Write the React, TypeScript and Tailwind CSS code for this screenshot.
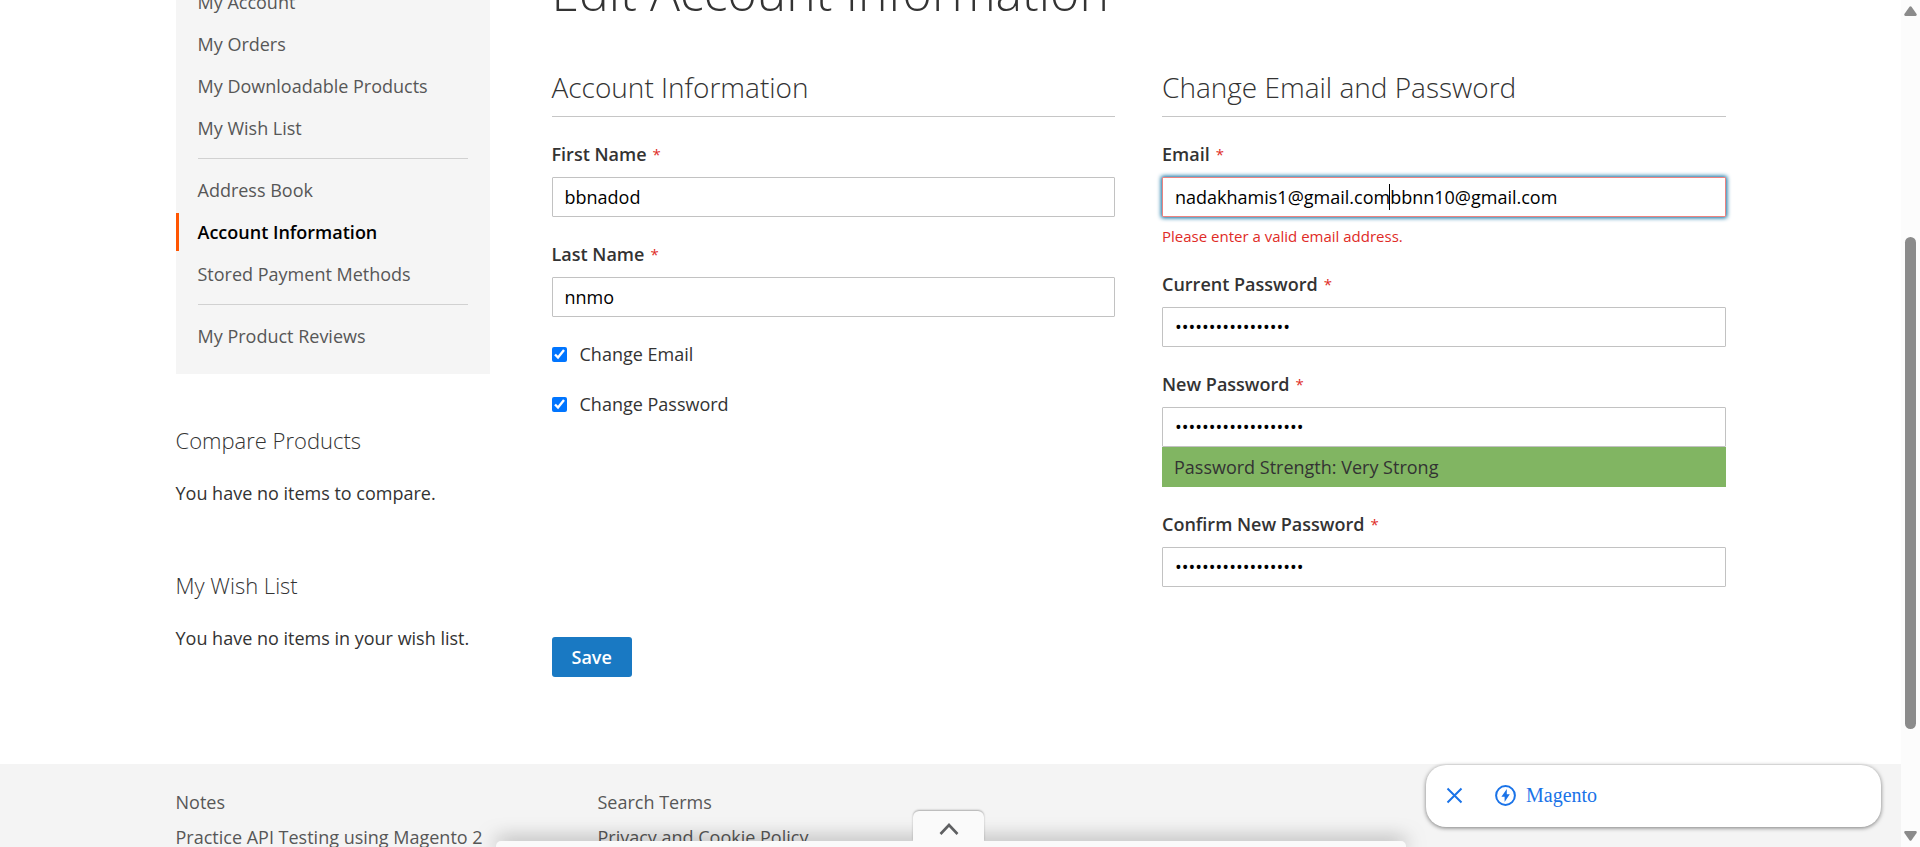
import React from "react";

type NavItem = { label: string; current?: boolean };

const navGroups: NavItem[][] = [
  [
    { label: "My Account" },
    { label: "My Orders" },
    { label: "My Downloadable Products" },
    { label: "My Wish List" },
  ],
  [
    { label: "Address Book" },
    { label: "Account Information", current: true },
    { label: "Stored Payment Methods" },
  ],
  [{ label: "My Product Reviews" }],
];

const footerColumns: string[][] = [
  ["Notes", "Practice API Testing using Magento 2"],
  ["Search Terms", "Privacy and Cookie Policy"],
];

function SideNav() {
  return (
    <nav aria-label="Account" className="bg-[#f5f5f5] pt-[18px] pb-[19px]">
      {navGroups.map((group, index) => (
        <React.Fragment key={index}>
          {index > 0 && <hr className="mx-[22px] mt-[11px] mb-3 border-[#d1d1d1]" />}
          <ul className="flex flex-col gap-1">
            {group.map((item) => (
              <li key={item.label}>
                <a
                  href="#"
                  aria-current={item.current ? "page" : undefined}
                  className={
                    item.current
                      ? "flex h-[38px] items-center border-l-[3px] border-[#ff5501] pl-[19px] font-semibold text-black"
                      : "flex h-[38px] items-center border-l-[3px] border-transparent pl-[19px] text-[#575757]"
                  }
                >
                  {item.label}
                </a>
              </li>
            ))}
          </ul>
        </React.Fragment>
      ))}
    </nav>
  );
}

function SideBlock({ title, text }: { title: string; text: string }) {
  return (
    <section>
      <h2 className="text-[22px] leading-7 font-light">{title}</h2>
      <p className="mt-[27px]">{text}</p>
    </section>
  );
}

function Field({
  id,
  label,
  type = "text",
  value,
  invalid,
  children,
}: {
  id: string;
  label: string;
  type?: string;
  value: string;
  invalid?: boolean;
  children?: React.ReactNode;
}) {
  return (
    <div>
      <label htmlFor={id} className="mb-[10px] flex gap-[6px] font-semibold">
        {label}
        <span className="text-[15px] font-normal text-[#e02b27]">*</span>
      </label>
      <div className="relative">
        <input
          id={id}
          type={type}
          defaultValue={value}
          aria-invalid={invalid}
          className={
            invalid
              ? "block h-10 w-full rounded-[1px] border border-[#ed8380] bg-white px-3 text-black shadow-[0_0_4px_1px_#00699d] outline-none"
              : "block h-10 w-full rounded-[1px] border border-[#c2c2c2] bg-white px-3 text-black outline-none"
          }
        />
        {invalid && <span className="absolute top-[7px] left-[227px] h-[26px] w-px bg-black" />}
      </div>
      {children}
    </div>
  );
}

function Check({ id, label }: { id: string; label: string }) {
  return (
    <div className="flex items-center gap-[13px]">
      <input id={id} type="checkbox" defaultChecked className="size-[15px] accent-[#0075ff]" />
      <label htmlFor={id}>{label}</label>
    </div>
  );
}

function Legend({ children }: { children: string }) {
  return (
    <h2 className="border-b border-[#c6c6c6] pb-3 text-[28px] leading-[34px] font-light">
      {children}
    </h2>
  );
}

function ScrollTrack() {
  return (
    <div className="flex w-[19px] shrink-0 flex-col items-center justify-between bg-[#fcfcfc] py-[6px]">
      <svg width="13" height="10" viewBox="0 0 13 10" fill="#8b8b8b">
        <path d="M5.5 0.8Q6.5-.4 7.5.8L12.6 8Q13.2 9.8 11.6 10H1.4Q-.2 9.8.4 8Z" />
      </svg>
      <div className="flex w-full grow flex-col items-center">
        <div className="grow-[221]" />
        <div className="w-[11px] grow-[492] rounded-full bg-[#8b8b8b]" />
        <div className="grow-[102]" />
      </div>
      <svg width="13" height="10" viewBox="0 0 13 10" fill="#8b8b8b">
        <path d="M5.5 9.2Q6.5 10.4 7.5 9.2L12.6 2Q13.2.2 11.6 0H1.4Q-.2.2.4 2Z" />
      </svg>
    </div>
  );
}

export default function App() {
  return (
    <div className="relative flex h-screen overflow-hidden bg-white font-['Open_Sans',sans-serif] text-[18px] leading-[25px] text-[#333]">
      <div className="min-w-0 grow overflow-hidden">
        <div className="mx-auto -mt-[35px] flex max-w-[1600px] gap-[62px] px-[25px] pb-[87px]">
          <aside className="w-[314px] shrink-0">
            <SideNav />
            <div className="mt-[52px] flex flex-col gap-[65px]">
              <SideBlock title="Compare Products" text="You have no items to compare." />
              <SideBlock title="My Wish List" text="You have no items in your wish list." />
            </div>
          </aside>

          <main className="min-w-0 grow">
            <h1 className="text-[50px] leading-[55px] font-light">Edit Account Information</h1>
            <form onSubmit={(event) => event.preventDefault()}>
              <div className="mt-[50px] grid grid-cols-2 gap-[47px]">
                <section>
                  <Legend>Account Information</Legend>
                  <div className="mt-[25px] flex flex-col gap-[25px]">
                    <Field id="firstname" label="First Name" value="bbnadod" />
                    <Field id="lastname" label="Last Name" value="nnmo" />
                    <Check id="change-email" label="Change Email" />
                    <Check id="change-password" label="Change Password" />
                  </div>
                </section>
                <section>
                  <Legend>Change Email and Password</Legend>
                  <div className="mt-[25px] flex flex-col gap-[25px]">
                    <Field
                      id="email"
                      label="Email"
                      value="nadakhamis1@gmail.combbnn10@gmail.com"
                      invalid
                    >
                      <p className="mt-[9px] text-[15px] leading-[21px] text-[#e02b27]">
                        Please enter a valid email address.
                      </p>
                    </Field>
                    <Field
                      id="current-password"
                      label="Current Password"
                      type="password"
                      value="12345678901234567"
                    />
                    <Field
                      id="new-password"
                      label="New Password"
                      type="password"
                      value="1234567890123456789"
                    >
                      <p className="flex h-10 items-center bg-[#81b562] px-3">
                        Password Strength: Very Strong
                      </p>
                    </Field>
                    <Field
                      id="confirm-password"
                      label="Confirm New Password"
                      type="password"
                      value="1234567890123456789"
                    />
                  </div>
                </section>
              </div>
              <button
                type="submit"
                className="mt-[50px] block h-10 rounded-[3px] bg-[#1979c3] px-5 font-semibold text-white"
              >
                Save
              </button>
            </form>
          </main>
        </div>

        <footer className="h-full bg-[#f4f4f4]">
          <div className="mx-auto flex max-w-[1600px] px-[25px] pt-[26px]">
            {footerColumns.map((links) => (
              <ul key={links[0]} className="flex w-[422px] flex-col gap-[10px]">
                {links.map((link) => (
                  <li key={link}>
                    <a href="#" className="text-[#575757]">
                      {link}
                    </a>
                  </li>
                ))}
              </ul>
            ))}
          </div>
        </footer>
      </div>

      <ScrollTrack />

      <div className="absolute right-[39px] bottom-5 flex h-[62px] w-[455px] items-center rounded-[20px] bg-white pb-[2px] pl-[18px] font-['Liberation_Serif',serif] text-[20px] text-[#1a73e8] shadow-[0_1px_4px_rgba(0,0,0,0.5)]">
        <button type="button" aria-label="Close">
          <svg width="21" height="21" viewBox="0 0 21 21" stroke="#1a73e8" strokeWidth="2">
            <path d="M3.5 3.5l14 14M17.5 3.5l-14 14" />
          </svg>
        </button>
        <a href="#" className="ml-[30px] flex items-center gap-[10px]">
          <svg width="21" height="21" viewBox="0 0 21 21">
            <circle cx="10.5" cy="10.5" r="9.4" fill="none" stroke="#1a73e8" strokeWidth="2" />
            <path d="M11.8 4L6.4 11.7H9.6V17L14.8 9.3H11.8Z" fill="#1a73e8" />
          </svg>
          Magento
        </a>
      </div>

      <div className="absolute inset-x-0 bottom-0 flex flex-col items-center pr-[18px]">
        <button
          type="button"
          aria-label="Expand"
          className="relative mr-[5px] flex h-[30px] w-[71px] items-center justify-center rounded-t-[6px] bg-[#fafafa] pt-[6px] shadow-[0_-1px_2px_rgba(0,0,0,0.3)] [clip-path:inset(-6px_-6px_0)]"
        >
          <svg width="20" height="13" viewBox="0 0 20 13" fill="none" stroke="#5f6062" strokeWidth="2.6">
            <path d="M1.5 11L10 2L18.5 11" />
          </svg>
        </button>
        <div className="h-[6px] w-[910px] rounded-t-[5px] bg-[#fafafa] shadow-[0_0_20px_rgba(0,0,0,0.6)]" />
      </div>
    </div>
  );
}
